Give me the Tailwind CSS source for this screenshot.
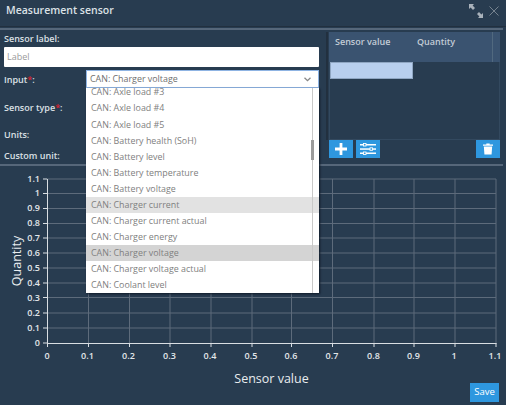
<!DOCTYPE html>
<html><head><meta charset="utf-8">
<script src="https://cdn.jsdelivr.net/npm/@tailwindcss/browser@4"></script>
</head>
<body class="m-0 overflow-hidden">
<div class="w-[506px] h-[405px] bg-[#283c50] relative overflow-hidden font-['Open_Sans',sans-serif] text-[#dfe3e8]">
  <header class="h-[27px] flex items-center justify-between pl-[6px] pr-[7px] border-b border-[#22303f]">
    <span class="text-[10.500px] font-semibold text-[#dce1e6] relative top-[-2px]">Measurement sensor</span>
    <div class="flex items-center gap-[6px] relative top-[-2px]">
      <svg width="14" height="14" viewBox="0 0 14 14" fill="#a9b2bb"><path d="M0 0h5L3.600 1.600 6 4 4 6 1.600 3.600 0 5zM14 14H9l1.400-1.600L8 10l2-2 2.400 2.400L14 9z"/></svg>
      <svg width="10" height="10" viewBox="0 0 10 10" stroke="#76838f" stroke-width="1" fill="none"><path d="M.5.5l9 9M9.500.5l-9 9"/></svg>
    </div>
  </header>
  <div class="h-[2px] mt-[1px] mr-[3px] bg-[#56677a]"></div>
  <section class="h-[134px] flex pl-[4px] pr-[6px]">
    <div class="w-[315px] shrink-0 flex flex-col text-[9px] font-semibold text-[#dbe0e5]">
      <div class="h-[17px] flex items-center">Sensor label:</div>
      <div class="h-[20px] bg-white rounded-[1px] pl-[3px] flex items-center text-[9px] font-normal text-[#9a9a9a]">Label</div>
      <div class="h-[28px] mt-[3px] pt-[3px]"><span>Input<span class="text-[#d8232f]">*</span>:</span></div>
      <div class="h-[27px] pt-[3px]"><span>Sensor type<span class="text-[#d8232f]">*</span>:</span></div>
      <div class="h-[23px] pt-[3px]">Units:</div>
      <div class="h-[14px] pt-[1px]">Custom unit:</div>
    </div>
    <div class="ml-[10px] w-[171px] mt-[2px] flex flex-col relative before:absolute before:left-[-3px] before:top-0 before:h-[108px] before:w-[2px] before:bg-[#22303f]">
      <div class="h-[30px] shrink-0 bg-[#3a5370] flex text-[9px] font-semibold text-[#c3ccd6] pt-[3px] relative">
        <span class="w-[88px] pl-[6px]">Sensor value</span><span>Quantity</span>
        <div class="absolute right-[7px] top-0 bottom-0 w-px bg-[#51697f]"></div>
      </div>
      <div class="h-[78px] shrink-0 border border-t-0 border-[#33495f]">
        <div class="h-[17px] w-[83px] bg-[#b8cfee] border border-[#8fa6c2]"></div>
      </div>
      <div class="flex h-[18px] gap-[3px]">
        <div class="w-[24px] bg-[#2e97df] flex items-center justify-center">
          <svg width="12" height="12" viewBox="0 0 13 13" fill="#fff"><path d="M5 0h3v5h5v3H8v5H5V8H0V5h5z"/></svg>
        </div>
        <div class="w-[24px] bg-[#2e97df] flex items-center justify-center">
          <svg width="16" height="12" viewBox="0 0 16 12"><g fill="#fff"><rect y="1" width="16" height="1.500"/><rect y="5.300" width="16" height="1.500"/><rect y="9.500" width="16" height="1.500"/></g><g fill="#2e97df" stroke="#fff" stroke-width=".9"><rect x="3.500" y=".5" width="2.500" height="2.500"/><rect x="10" y="4.800" width="2.500" height="2.500"/><rect x="3.500" y="9" width="2.500" height="2.500"/></g></svg>
        </div>
        <div class="w-[24px] ml-auto bg-[#2e97df] flex items-center justify-center">
          <svg width="10" height="12" viewBox="0 0 12 13" fill="#fff"><path d="M4 0h4v1h4v1.600H0V1h4zM1 3.500h10l-.7 9.500H1.700z"/></svg>
        </div>
      </div>
    </div>
  </section>
  <div class="h-[2px] mr-[3px] bg-[#56677a]"></div>
  <svg class="absolute left-0 top-[165px]" width="506" height="240" viewBox="0 165 506 240" font-family="Open Sans, sans-serif">
    <g stroke="#5d6b7b" stroke-width="1">
      <path d="M47 179H496M47 193.500H496M47 208.500H496M47 223.500H496M47 238H496M47 253H496M47 268H496M47 283H496M47 297.500H496M47 313H496M47 328H496"/>
      <path d="M88.500 179V343M129.500 179V343M170 179V343M211 179V343M252 179V343M291.500 179V343M332.500 179V343M374 179V343M414 179V343M455 179V343M496 179V343"/>
    </g>
    <path d="M47.500 179V343.500H496.500" fill="none" stroke="#d9dee3" stroke-width="1"/>
    <g stroke="#d9dee3"><path d="M43 179H47M43 193.500H47M43 208.500H47M43 223.500H47M43 238H47M43 253H47M43 268H47M43 283H47M43 297.500H47M43 313H47M43 328H47M43 343H47M47.500 343V347M88.500 343V347M129.500 343V347M170 343V347M211 343V347M252 343V347M291.500 343V347M332.500 343V347M374 343V347M414 343V347M455 343V347M496 343V347"/></g>
    <g fill="#e3e7ea" font-size="9" font-weight="600" text-anchor="end">
      <text x="40" y="182">1.1</text><text x="40" y="196">1</text><text x="40" y="211">0.9</text><text x="40" y="226">0.8</text><text x="40" y="241">0.7</text><text x="40" y="256">0.6</text><text x="40" y="271">0.5</text><text x="40" y="286">0.4</text><text x="40" y="301">0.3</text><text x="40" y="316">0.2</text><text x="40" y="331">0.1</text><text x="40" y="346">0</text>
    </g>
    <g fill="#e3e7ea" font-size="9" font-weight="600" text-anchor="middle">
      <text x="47" y="359">0</text><text x="87.500" y="359">0.1</text><text x="128.500" y="359">0.2</text><text x="169.500" y="359">0.3</text><text x="210" y="359">0.4</text><text x="251" y="359">0.5</text><text x="291" y="359">0.6</text><text x="332" y="359">0.7</text><text x="373.500" y="359">0.8</text><text x="413.500" y="359">0.9</text><text x="454" y="359">1</text><text x="495" y="359">1.1</text>
    </g>
    <text x="271.500" y="383" fill="#e8ecef" font-size="12.500" text-anchor="middle">Sensor value</text>
    <text transform="translate(20.500 261) rotate(-90)" fill="#e8ecef" font-size="12.500" text-anchor="middle">Quantity</text>
  </svg>
  <button class="absolute left-[470px] top-[383px] w-[29px] h-[19px] bg-[#2e97df] text-[9.500px] text-white flex items-center justify-center">Save</button>
  <div class="absolute left-[86px] top-[70px] w-[233px] h-[18px] bg-white border border-[#8fb4e3] pl-[3px] pr-[7px] flex items-center justify-between text-[8.900px] text-[#6f6f6f]">
    <span>CAN: Charger voltage</span>
    <svg width="7" height="5" viewBox="0 0 7 5" fill="none" stroke="#888" stroke-width="1.300"><path d="M.5.700l3 3 3-3"/></svg>
  </div>
  <div class="absolute left-[86px] top-[88px] w-[233px] h-[205px] bg-white overflow-hidden shadow-[1px_1px_2px_#101a28] text-[8.900px] text-[#808080]">
    <div class="relative top-[-4px]">
      <div class="h-[16.100px] pl-[5px] flex items-center">CAN: Axle load #3</div>
      <div class="h-[16.100px] pl-[5px] flex items-center">CAN: Axle load #4</div>
      <div class="h-[16.100px] pl-[5px] flex items-center">CAN: Axle load #5</div>
      <div class="h-[16.100px] pl-[5px] flex items-center">CAN: Battery health (SoH)</div>
      <div class="h-[16.100px] pl-[5px] flex items-center">CAN: Battery level</div>
      <div class="h-[16.100px] pl-[5px] flex items-center">CAN: Battery temperature</div>
      <div class="h-[16.100px] pl-[5px] flex items-center">CAN: Battery voltage</div>
      <div class="h-[16.100px] pl-[5px] flex items-center bg-[#e2e2e2]">CAN: Charger current</div>
      <div class="h-[16.100px] pl-[5px] flex items-center">CAN: Charger current actual</div>
      <div class="h-[16.100px] pl-[5px] flex items-center">CAN: Charger energy</div>
      <div class="h-[16.100px] pl-[5px] flex items-center bg-[#d4d4d4]">CAN: Charger voltage</div>
      <div class="h-[16.100px] pl-[5px] flex items-center">CAN: Charger voltage actual</div>
      <div class="h-[16.100px] pl-[5px] flex items-center">CAN: Coolant level</div>
    </div>
    <div class="absolute right-[6px] top-0 bottom-0 w-px bg-[#c8c8c8]"></div>
    <div class="absolute right-[5px] top-[52px] h-[20px] w-[3px] bg-[#9b9b9b]"></div>
  </div>
</div>
</body></html>
